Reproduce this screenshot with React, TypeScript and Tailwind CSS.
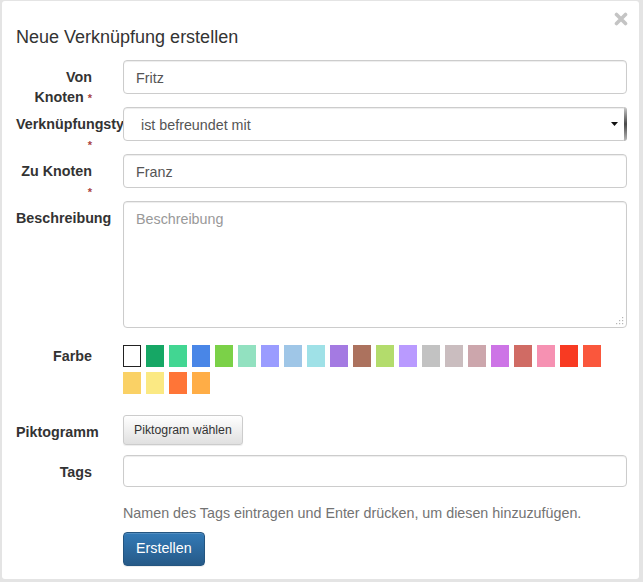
import React from "react";

const colors = [
  "#ffffff",
  "#16a765",
  "#42d692",
  "#4986e7",
  "#7bd148",
  "#92e1c0",
  "#9a9cff",
  "#9fc6e7",
  "#9fe1e7",
  "#a47ae2",
  "#ac725e",
  "#b3dc6c",
  "#b99aff",
  "#c2c2c2",
  "#cabdbf",
  "#cca6ac",
  "#cd74e6",
  "#d06b64",
  "#f691b2",
  "#f83a22",
  "#fa573c",
  "#fad165",
  "#fbe983",
  "#ff7537",
  "#ffad46",
];

const Label = ({
  children,
  required,
  className = "pt-[7px]",
}: {
  children: React.ReactNode;
  required?: boolean;
  className?: string;
}) => (
  <div
    className={`w-[76px] shrink-0 text-right text-[14.3px] font-bold leading-5 text-[#333] ${className}`}
  >
    {children}{" "}
    {required && <span className="text-[11px] font-bold text-[#a94442]">*</span>}
  </div>
);

const inputClass =
  "w-full rounded-[4px] border border-[#ccc] bg-white px-[12px] text-[14.3px] text-[#555] shadow-[inset_0_1px_1px_rgba(0,0,0,0.075)] outline-none";

export default function App() {
  return (
    <div className="h-[582px] w-[643px] bg-[#e4e4e4] pl-[2px] pt-[1px] font-['Liberation_Sans',Arial,sans-serif]">
      <div className="h-[578px] w-[637px] rounded-[3px] bg-white">
        {/* Header */}
        <div className="flex h-[59px] justify-between pl-[14px] pr-[11px]">
          <h4 className="pt-[26px] text-[18px] leading-[20px] text-[#333]">
            Neue Verknüpfung erstellen
          </h4>
          <svg viewBox="0 0 14 14" className="mt-[11px] h-[14px] w-[14px]">
            <path
              d="M2.5 2.5 L11.5 11.5 M11.5 2.5 L2.5 11.5"
              stroke="#c4c4c4"
              strokeWidth="3.6"
              strokeLinecap="round"
            />
          </svg>
        </div>

        {/* Body */}
        <div className="pl-[14px]">
          <div className="flex h-[47px]">
            <Label required>Von Knoten</Label>
            <div className="relative ml-[31px] w-[504px]">
              <input className={`${inputClass} h-[34px] pt-[1px]`} defaultValue="Fritz" />
            </div>
          </div>

          <div className="flex h-[47px]">
            <Label required>Verknüpfungstyp</Label>
            <div className="relative ml-[31px] w-[504px]">
              <div className="relative flex h-[34px] items-center rounded-[4px] border border-[#ccc] bg-white pl-[17px] pt-[3px] text-[14.3px] text-[#555] shadow-[inset_0_1px_1px_rgba(0,0,0,0.075)]">
                ist befreundet mit
                <svg viewBox="0 0 7 4" className="absolute right-[8px] top-[14px] h-[4px] w-[7px]">
                  <path d="M0 0 L7 0 L3.5 4 Z" fill="#111" />
                </svg>
                <div className="absolute right-[-1px] top-[-1px] h-[34px] w-[3px] rounded-r-[3px] bg-gradient-to-b from-[#cfcfcf] via-[#4a4a4a] to-[#bdbdbd]" />
              </div>
            </div>
          </div>

          <div className="flex h-[47px]">
            <Label required>Zu Knoten</Label>
            <div className="relative ml-[31px] w-[504px]">
              <input className={`${inputClass} h-[34px] pt-[1px]`} defaultValue="Franz" />
            </div>
          </div>

          <div className="flex">
            <Label>Beschreibung</Label>
            <div className="relative ml-[31px] w-[504px]">
              <div className="relative h-[127px] rounded-[4px] border border-[#ccc] bg-white px-[12px] pt-[7px] text-[14.3px] leading-5 text-[#999] shadow-[inset_0_1px_1px_rgba(0,0,0,0.075)]">
                Beschreibung
                <svg viewBox="0 0 8 8" className="absolute bottom-[2px] right-[2px] h-[8px] w-[8px]">
                  <rect x="6" y="0" width="1.2" height="1.2" fill="#b5b5b5" />
                  <rect x="3" y="3" width="1.2" height="1.2" fill="#b5b5b5" />
                  <rect x="6" y="3" width="1.2" height="1.2" fill="#b5b5b5" />
                  <rect x="0" y="6" width="1.2" height="1.2" fill="#b5b5b5" />
                  <rect x="3" y="6" width="1.2" height="1.2" fill="#b5b5b5" />
                  <rect x="6" y="6" width="1.2" height="1.2" fill="#b5b5b5" />
                </svg>
              </div>
            </div>
          </div>

          <div className="flex">
            <Label className="pt-[18px]">Farbe</Label>
            <div className="relative ml-[31px] flex w-[504px] flex-wrap pt-[17px]">
              {colors.map((c, i) => (
                <div
                  key={c}
                  className={`mb-[5px] mr-[5px] h-[22px] w-[18px] ${
                    i === 0 ? "border-[1.5px] border-[#222]" : ""
                  }`}
                  style={{ backgroundColor: c }}
                />
              ))}
            </div>
          </div>

          <div className="mt-[16px] flex">
            <Label>Piktogramm</Label>
            <div className="relative ml-[31px] w-[504px]">
              <button className="h-[30px] rounded-[3px] border border-[#ccc] bg-gradient-to-b from-white to-[#e0e0e0] px-[10px] text-[12.3px] text-[#333] shadow-[0_1px_1px_rgba(0,0,0,0.075)]">
                Piktogram wählen
              </button>
            </div>
          </div>

          <div className="mt-[10px] flex">
            <Label>Tags</Label>
            <div className="relative ml-[31px] w-[504px]">
              <div className={`${inputClass} h-[32px]`} />
            </div>
          </div>

          <div className="ml-[107px]">
            <p className="mt-[16px] text-[14.3px] leading-5 text-[#737373]">
              Namen des Tags eintragen und Enter drücken, um diesen hinzuzufügen.
            </p>
            <button className="mt-[9px] h-[34px] rounded-[4px] border border-[#245580] bg-gradient-to-b from-[#337ab7] to-[#265a88] px-[12px] text-[14.3px] text-white shadow-[inset_0_1px_0_rgba(255,255,255,0.15),0_1px_1px_rgba(0,0,0,0.075)]">
              Erstellen
            </button>
          </div>
        </div>
      </div>
    </div>
  );
}
